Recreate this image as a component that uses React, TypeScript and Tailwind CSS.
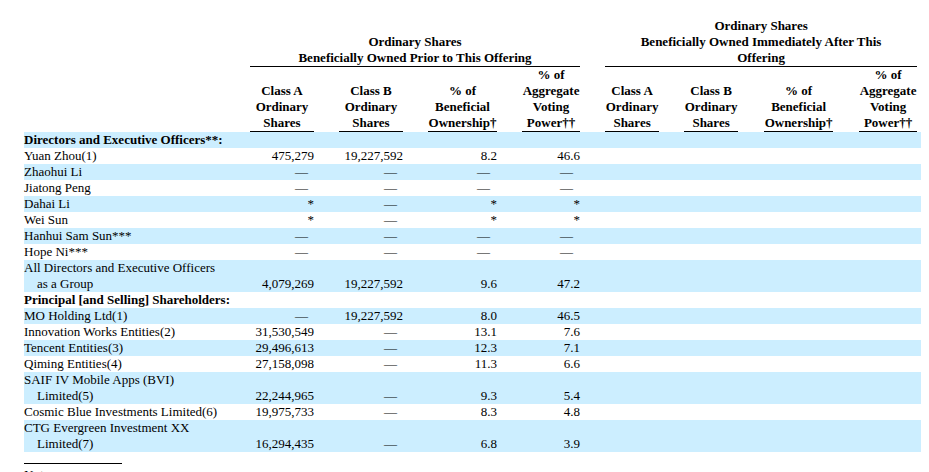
const DASH = "—"

type Row = {
  name: string[]
  bold?: boolean
  vals?: string[]
}

const rows: Row[] = [
  { name: ["Directors and Executive Officers**:"], bold: true },
  { name: ["Yuan Zhou(1)"], vals: ["475,279", "19,227,592", "8.2", "46.6"] },
  { name: ["Zhaohui Li"], vals: [DASH, DASH, DASH, DASH] },
  { name: ["Jiatong Peng"], vals: [DASH, DASH, DASH, DASH] },
  { name: ["Dahai Li"], vals: ["*", DASH, "*", "*"] },
  { name: ["Wei Sun"], vals: ["*", DASH, "*", "*"] },
  { name: ["Hanhui Sam Sun***"], vals: [DASH, DASH, DASH, DASH] },
  { name: ["Hope Ni***"], vals: [DASH, DASH, DASH, DASH] },
  { name: ["All Directors and Executive Officers", "as a Group"], vals: ["4,079,269", "19,227,592", "9.6", "47.2"] },
  { name: ["Principal [and Selling] Shareholders:"], bold: true },
  { name: ["MO Holding Ltd(1)"], vals: [DASH, "19,227,592", "8.0", "46.5"] },
  { name: ["Innovation Works Entities(2)"], vals: ["31,530,549", DASH, "13.1", "7.6"] },
  { name: ["Tencent Entities(3)"], vals: ["29,496,613", DASH, "12.3", "7.1"] },
  { name: ["Qiming Entities(4)"], vals: ["27,158,098", DASH, "11.3", "6.6"] },
  { name: ["SAIF IV Mobile Apps (BVI)", "Limited(5)"], vals: ["22,244,965", DASH, "9.3", "5.4"] },
  { name: ["Cosmic Blue Investments Limited(6)"], vals: ["19,975,733", DASH, "8.3", "4.8"] },
  { name: ["CTG Evergreen Investment XX", "Limited(7)"], vals: ["16,294,435", DASH, "6.8", "3.9"] },
]

// widths of every column, spacer columns included
const widths = [226, 64, 25, 64, 25, 69, 25, 58, 25, 54, 25, 54, 26, 69, 26, 58, 4]

function Val({ v, wide }: { v: string; wide?: boolean }) {
  const pad = v === DASH ? (wide ? "pr-[7px]" : "pr-[6px]") : "pr-0"
  return <td className={`p-0 text-right align-bottom whitespace-nowrap ${pad}`}>{v}</td>
}

function ColHead({ lines }: { lines: string[] }) {
  return (
    <td className="p-0 text-center align-bottom font-bold border-b border-black">
      {lines.map((l, i) => (
        <div key={i}>{l}</div>
      ))}
    </td>
  )
}

export default function App() {
  return (
    <div className="min-h-[472px] bg-white text-black text-[13px] leading-[16px] font-['Liberation_Serif','Times_New_Roman',serif]">
      <div className="pl-[24px] pt-[18px]">
        <table className="table-fixed border-collapse w-[897px]">
          <colgroup>
            {widths.map((w, i) => (
              <col key={i} style={{ width: w }} />
            ))}
          </colgroup>
          <thead>
            <tr>
              <td className="p-0" />
              <td colSpan={7} className="p-0 text-center align-bottom font-bold border-b border-black">
                <div>Ordinary Shares</div>
                <div>Beneficially Owned Prior to This Offering</div>
              </td>
              <td className="p-0" />
              <td colSpan={7} className="p-0 text-center align-bottom font-bold border-b border-black">
                <div>Ordinary Shares</div>
                <div>Beneficially Owned Immediately After This</div>
                <div>Offering</div>
              </td>
              <td className="p-0" />
            </tr>
            <tr>
              <td className="p-0" />
              <ColHead lines={["Class A", "Ordinary", "Shares"]} />
              <td className="p-0" />
              <ColHead lines={["Class B", "Ordinary", "Shares"]} />
              <td className="p-0" />
              <ColHead lines={["% of", "Beneficial", "Ownership†"]} />
              <td className="p-0" />
              <ColHead lines={["% of", "Aggregate", "Voting", "Power††"]} />
              <td className="p-0" />
              <ColHead lines={["Class A", "Ordinary", "Shares"]} />
              <td className="p-0" />
              <ColHead lines={["Class B", "Ordinary", "Shares"]} />
              <td className="p-0" />
              <ColHead lines={["% of", "Beneficial", "Ownership†"]} />
              <td className="p-0" />
              <ColHead lines={["% of", "Aggregate", "Voting", "Power††"]} />
              <td className="p-0" />
            </tr>
          </thead>
          <tbody>
            {rows.map((r, i) => (
              <tr key={i} className={i % 2 === 0 ? "bg-[#cceeff]" : "bg-white"}>
                <td className={`p-0 align-bottom whitespace-nowrap ${r.bold ? "font-bold" : ""}`}>
                  {r.name.map((l, j) => (
                    <div key={j} className={j > 0 ? "pl-[13px]" : ""}>
                      {l}
                    </div>
                  ))}
                </td>
                {r.vals ? (
                  <>
                    <Val v={r.vals[0]} />
                    <td className="p-0" />
                    <Val v={r.vals[1]} />
                    <td className="p-0" />
                    <Val v={r.vals[2]} wide />
                    <td className="p-0" />
                    <Val v={r.vals[3]} wide />
                  </>
                ) : (
                  <td colSpan={7} className="p-0" />
                )}
                <td colSpan={9} className="p-0" />
              </tr>
            ))}
          </tbody>
        </table>
        <div className="mt-[11px] w-[98px] border-t border-black" />
        <div className="pt-[3px]">Notes:</div>
      </div>
    </div>
  )
}
